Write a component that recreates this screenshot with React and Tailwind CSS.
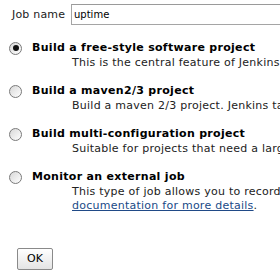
const options = [
  {
    title: "Build a free-style software project",
    desc: "This is the central feature of Jenkins. Jenkins will build your project",
    checked: true,
  },
  {
    title: "Build a maven2/3 project",
    desc: "Build a maven 2/3 project. Jenkins takes advantage of your POM files",
  },
  {
    title: "Build multi-configuration project",
    desc: "Suitable for projects that need a large number of different configurations",
  },
  {
    title: "Monitor an external job",
    desc: "This type of job allows you to record the execution of a process run outside Jenkins,",
    link: true,
  },
];

function Radio({ checked }) {
  return (
    <span className="flex h-[13px] w-[13px] shrink-0 items-center justify-center rounded-full border border-[#7a7a7a] bg-gradient-to-br from-[#d8d8d8] to-white">
      {checked && <span className="h-[6px] w-[6px] rounded-full bg-[#111]" />}
    </span>
  );
}

export default function App() {
  return (
    <div
      className="h-[280px] w-[280px] overflow-hidden bg-white text-[11px] text-black"
      style={{ fontFamily: '"DejaVu Sans", Verdana, sans-serif' }}
    >
      <div className="flex items-start pt-[4px]">
        <span className="ml-[12px] mt-[4px] w-[59px] shrink-0 leading-[13px] tracking-[0.2px] text-[#222]">Job name</span>
        <div className="h-[21px] w-[260px] shrink-0 border border-[#a5a5a5] border-t-[#9a9a9a] bg-white pl-[2px] text-[10px] leading-[19px] text-black">
          uptime
        </div>
      </div>

      <div className="mt-[15px] flex flex-col gap-[13px]">
        {options.map((o) => (
          <div key={o.title}>
            <div className="flex h-[16px] items-center">
              <span className="ml-[9px] w-[23px]">
                <Radio checked={o.checked} />
              </span>
              <span className="whitespace-nowrap font-bold leading-[16px] tracking-[0.3px]">{o.title}</span>
            </div>
            <div className="ml-[72px] whitespace-nowrap leading-[14px] tracking-[0.25px] text-[#222]">{o.desc}</div>
            {o.link && (
              <div className="ml-[72px] whitespace-nowrap leading-[14px] tracking-[0.25px] text-[#222]">
                <a href="#" className="text-[#204a87] underline">documentation for more details</a>.
              </div>
            )}
          </div>
        ))}
      </div>

      <div className="ml-[17px] mt-[35px]">
        <button className="h-[22px] w-[36px] rounded-[2px] border border-[#8a8a8a] bg-gradient-to-b from-white to-[#e4e4e4] text-[11px] leading-[20px] text-black">
          OK
        </button>
      </div>
    </div>
  );
}
